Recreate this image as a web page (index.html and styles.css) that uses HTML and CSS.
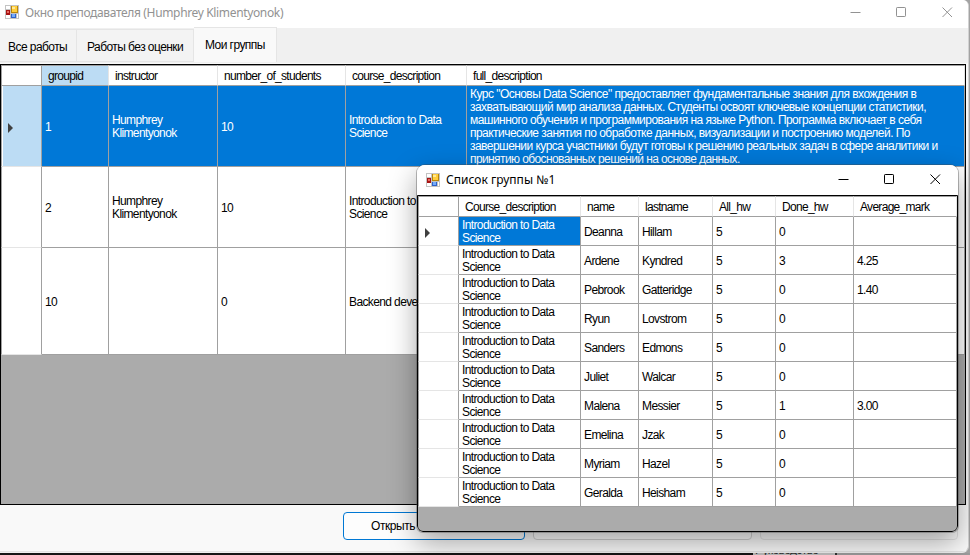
FILE: index.html
```html
<!DOCTYPE html>
<html lang="ru">
<head>
<meta charset="utf-8">
<title>Окно преподавателя</title>
<link rel="stylesheet" href="styles.css">
</head>
<body>
<svg width="0" height="0" class="defs">
  <symbol id="form" viewBox="0 0 14 14">
    <path fill="#c3c3c3" d="M0 0h14v14H0z"/>
    <path fill="#fff" d="M1 1h4v3H1zM1 10h4v3H1zM12 9h1v4h-1z"/>
    <path fill="#a81414" d="M1 5h4v5H1z"/><path fill="#e96b62" d="M2 6h2v2H2z"/>
    <path fill="#b8860b" d="M6 1h7v7H6z"/><path fill="#ffce3d" d="M7 1h5v6H7z"/><path fill="#ffe998" d="M7 2h3v2H7z"/>
    <path fill="#2e62c9" d="M6 9h5v4H6z"/><path fill="#74aafa" d="M7 9h3v3H7z"/>
  </symbol>
  <symbol id="min" viewBox="0 0 11 11"><path d="M.5 5.5h10"/></symbol>
  <symbol id="max" viewBox="0 0 11 11"><rect x=".5" y=".5" width="9" height="9" rx=".7"/></symbol>
  <symbol id="close" viewBox="0 0 11 11"><path d="M.5 .5l9.500 9.500M10 .5l-9.500 9.500"/></symbol>
</svg>
<div class="desktop">
  <main class="window">
    <header class="titlebar">
      <svg class="app"><use href="#form"/></svg>
      <h1>Окно преподавателя (Humphrey Klimentyonok)</h1>
      <div class="controls"><svg><use href="#min"/></svg><svg><use href="#max"/></svg><svg><use href="#close"/></svg></div>
    </header>
    <nav class="tabs"><span class="tab first">Все работы</span><span class="tab second">Работы без оценки</span><span class="tab active">Мои группы</span></nav>
    <section class="grid groups">
      <div class="row head"><div class="rh"></div><div class="sel">groupid</div><div>instructor</div><div>number_of_students</div><div>course_description</div><div>full_description</div></div>
      <div class="row current"><div class="rh"><i class="arrow"></i></div><div>1</div><div class="two">Humphrey<br>Klimentyonok</div><div>10</div><div class="two">Introduction to Data<br>Science</div>
        <div class="full"><span>Курс "Основы Data Science" предоставляет фундаментальные знания для вхождения в</span><span>захватывающий мир анализа данных. Студенты освоят ключевые концепции статистики,</span><span>машинного обучения и программирования на языке Python. Программа включает в себя</span><span>практические занятия по обработке данных, визуализации и построению моделей. По</span><span>завершении курса участники будут готовы к решению реальных задач в сфере аналитики и</span><span class="last">принятию обоснованных решений на основе данных.</span></div></div>
      <div class="row"><div class="rh"></div><div>2</div><div class="two">Humphrey<br>Klimentyonok</div><div>10</div><div class="two">Introduction to Data<br>Science</div><div></div></div>
      <div class="row tall"><div class="rh"></div><div>10</div><div></div><div>0</div><div>Backend development</div><div></div></div>
    </section>
    <footer class="buttons"><button class="primary">Открыть</button><button class="plain"></button><button class="off" disabled></button></footer>
  </main>
  <div class="behind"><div class="snippet"><span>Руководство</span></div><div class="rest"></div></div>
</div>
<aside class="dialog">
  <header class="titlebar">
    <svg class="app"><use href="#form"/></svg>
    <h2>Список группы №1</h2>
    <div class="controls"><svg><use href="#min"/></svg><svg><use href="#max"/></svg><svg><use href="#close"/></svg></div>
  </header>
  <section class="grid students">
    <div class="row head"><div class="rh"></div><div>Course_description</div><div>name</div><div>lastname</div><div>All_hw</div><div>Done_hw</div><div>Average_mark</div></div>
    <div class="row"><div class="rh"><i class="arrow"></i></div><div class="two picked">Introduction to Data<br>Science</div><div>Deanna</div><div>Hillam</div><div>5</div><div>0</div><div></div></div>
    <div class="row"><div class="rh"></div><div class="two">Introduction to Data<br>Science</div><div>Ardene</div><div>Kyndred</div><div>5</div><div>3</div><div>4.25</div></div>
    <div class="row"><div class="rh"></div><div class="two">Introduction to Data<br>Science</div><div>Pebrook</div><div>Gatteridge</div><div>5</div><div>0</div><div>1.40</div></div>
    <div class="row"><div class="rh"></div><div class="two">Introduction to Data<br>Science</div><div>Ryun</div><div>Lovstrom</div><div>5</div><div>0</div><div></div></div>
    <div class="row"><div class="rh"></div><div class="two">Introduction to Data<br>Science</div><div>Sanders</div><div>Edmons</div><div>5</div><div>0</div><div></div></div>
    <div class="row"><div class="rh"></div><div class="two">Introduction to Data<br>Science</div><div>Juliet</div><div>Walcar</div><div>5</div><div>0</div><div></div></div>
    <div class="row"><div class="rh"></div><div class="two">Introduction to Data<br>Science</div><div>Malena</div><div>Messier</div><div>5</div><div>1</div><div>3.00</div></div>
    <div class="row"><div class="rh"></div><div class="two">Introduction to Data<br>Science</div><div>Emelina</div><div>Jzak</div><div>5</div><div>0</div><div></div></div>
    <div class="row"><div class="rh"></div><div class="two">Introduction to Data<br>Science</div><div>Myriam</div><div>Hazel</div><div>5</div><div>0</div><div></div></div>
    <div class="row"><div class="rh"></div><div class="two">Introduction to Data<br>Science</div><div>Geralda</div><div>Heisham</div><div>5</div><div>0</div><div></div></div>
  </section>
</aside>
</body>
</html>
```
FILE: styles.css
```css
* { box-sizing: border-box; }
body { margin: 0; width: 970px; height: 555px; overflow: hidden; position: relative; font: 12px/13px "Liberation Sans", Arial, sans-serif; letter-spacing: -.62px; color: #000; }
.defs { position: absolute; }
.desktop { height: 555px; background: #a3a3a3; display: flex; flex-direction: column; }
.window { width: 969px; height: 553px; background: #f9f9f9; border-right: 1px solid #d2d2d2; border-bottom: 1px solid #efefef; border-radius: 0 6px 7px 0; overflow: hidden; display: flex; flex-direction: column; }
.titlebar { display: flex; align-items: center; background: #fff; flex: none; }
.window > .titlebar { height: 28px; padding: 0 15px 4px 5px; color: #929292; }
.app { width: 14px; height: 14px; flex: none; }
h1, h2 { margin: 0; font: 12px/16px "Noto Sans", sans-serif; white-space: nowrap; }
h1 { margin: 2px 0 0 6px; letter-spacing: -.35px; }
.controls { margin-left: auto; display: flex; gap: 35px; }
.controls svg { width: 11px; height: 11px; fill: none; stroke: currentColor; }
.tabs { height: 36px; flex: none; background: #f0f0f0; display: flex; align-items: flex-end; padding-bottom: 1px; border-bottom: 1px solid #f9f9f9; white-space: nowrap; }
.tab { height: 33px; background: #f3f3f3; border: 1px solid #e5e5e5; border-left: 0; padding-top: 11px; letter-spacing: -.56px; }
.first { width: 77px; padding-left: 8px; }
.second { width: 117px; padding-left: 10px; }
.active { width: 83px; height: 35px; padding-left: 11px; background: #f9f9f9; border-bottom: 0; }
.grid { background: #ababab; border: 1px solid #000; overflow: hidden; flex: none; }
.groups { width: 966px; height: 441px; }
.row { display: grid; }
.groups .row { grid-template-columns: 41px 67px 109px 128px 121px 498px; height: 81px; }
.groups .tall { height: 107px; }
.row > div { background: #fff; border-right: 1px solid #a0a0a0; border-bottom: 1px solid #a0a0a0; padding: 3px 0 0 3px; display: flex; flex-direction: column; justify-content: center; white-space: nowrap; overflow: hidden; }
.row > .two, .head > div { padding-top: 1px; }
.row > .rh { border-left: 1px solid #a0a0a0; border-bottom-color: #e5e5e5; padding-left: 5px; }
.head > div { border-top: 1px solid #a0a0a0; border-right-color: #e5e5e5; padding: 1px 0 0 6px; letter-spacing: -.7px; }
.head > .rh { border-right-color: #a0a0a0; border-bottom-color: #a0a0a0; }
.head > .sel { background: #bcdcf4; }
.current > div { background: #0078d7; color: #fff; }
.current > .rh { background: #bcdcf4; box-shadow: inset 1px 0 #fff; }
.row > .full { justify-content: flex-start; padding-top: 2px; letter-spacing: -.54px; }
.full span { display: block; height: 13px; }
.full .last { letter-spacing: -.6px; }
.arrow { width: 0; height: 0; border: 5px solid transparent; border-left-color: #404040; border-right: 0; margin-left: 1px; }
.buttons { display: flex; gap: 8px; padding: 7px 0 0 343px; height: 47px; flex: none; border-bottom: 1px solid #e3e3e3; }
button { height: 28px; border: 1px solid #d0d0d0; border-radius: 4px; background: #fdfdfd; font: inherit; padding: 0; text-align: left; }
.primary { width: 182px; border-color: #0078d4; padding-left: 27px; letter-spacing: -.45px; }
.plain { width: 219px; }
.off { width: 198px; border-color: #e2e2e2; background: #f7f7f7; }
.behind { height: 2px; display: flex; background: #151515; overflow: hidden; }
.snippet { width: 84px; margin-left: 753px; background: #bdbdbd; border-right: 2px solid #333; overflow: hidden; }
.snippet span { display: block; margin: -9px 0 0 2px; color: #333; }
.rest { flex: 1; background: #9b9b9b; }
.dialog { position: absolute; left: 417px; top: 165px; width: 541px; height: 367px; background: #fff; border-radius: 8px 8px 6px 6px; overflow: hidden; box-shadow: 0 0 0 1px rgba(70,70,70,.38), 0 10px 28px rgba(0,0,0,.36); }
.dialog .titlebar { height: 30px; padding: 0 17px 1px 9px; }
.dialog h2 { margin-left: 6px; letter-spacing: .02px; }
.students { height: 337px; border-radius: 0 0 6px 6px; }
.students .row { height: 29px; grid-template-columns: 41px 122px 58px 74px 63px 78px 103px; }
.groups .head { height: 21px; }
.students .head { height: 21px; }
.row > .picked { background: #0078d7; color: #fff; }
```
